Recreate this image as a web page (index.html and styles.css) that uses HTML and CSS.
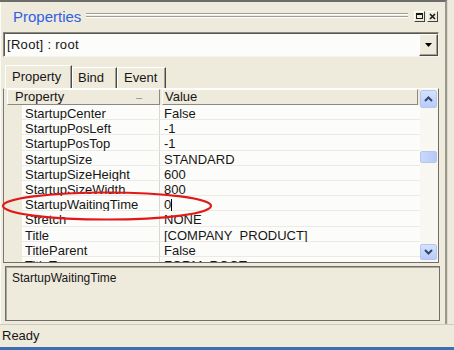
FILE: index.html
```html
<!DOCTYPE html>
<html>
<head>
<meta charset="utf-8">
<title>Properties</title>
<link rel="stylesheet" href="styles.css">
</head>
<body>
<div class="app">
  <div class="main">
    <div class="panel">
      <div class="titlebar">
        <span class="title">Properties</span>
        <span class="grip"></span>
        <span class="tbtn first"><svg width="9" height="9" viewBox="0 0 9 9"><rect x="1.5" y="1.5" width="6" height="5" fill="none" stroke="#1a1a1a"/><rect x="1" y="1" width="7" height="2" fill="#1a1a1a"/></svg></span>
        <span class="tbtn"><svg width="9" height="9" viewBox="0 0 9 9"><path d="M2 2 L7 7 M7 2 L2 7" stroke="#1a1a1a" stroke-width="1.6"/></svg></span>
      </div>
      <div class="combo">
        <span class="combo-text">[Root] : root</span>
        <span class="combo-btn"><svg width="7" height="4" viewBox="0 0 7 4"><path d="M0 0h7L3.5 4z" fill="#000"/></svg></span>
      </div>
      <div class="tabs">
        <span class="tab active t1">Property</span>
        <span class="tab t2">Bind</span>
        <span class="tab t3">Event</span>
      </div>
      <div class="grid">
        <div class="table">
          <div class="head">
            <div class="hcell hname">Property<span class="sort">–</span></div>
            <div class="hcell hval">Value</div>
          </div>
          <div class="rows">
            <div class="row"><span class="gut"></span><span class="name">StartupCenter</span><span class="val">False</span></div>
            <div class="row"><span class="gut"></span><span class="name">StartupPosLeft</span><span class="val">-1</span></div>
            <div class="row"><span class="gut"></span><span class="name">StartupPosTop</span><span class="val">-1</span></div>
            <div class="row"><span class="gut"></span><span class="name">StartupSize</span><span class="val">STANDARD</span></div>
            <div class="row"><span class="gut"></span><span class="name">StartupSizeHeight</span><span class="val">600</span></div>
            <div class="row"><span class="gut"></span><span class="name">StartupSizeWidth</span><span class="val">800</span></div>
            <div class="row"><span class="gut"></span><span class="name">StartupWaitingTime</span><span class="val">0<span class="caret"></span></span></div>
            <div class="row"><span class="gut"></span><span class="name">Stretch</span><span class="val">NONE</span></div>
            <div class="row"><span class="gut"></span><span class="name">Title</span><span class="val">[COMPANY_PRODUCT]</span></div>
            <div class="row"><span class="gut"></span><span class="name">TitleParent</span><span class="val">False</span></div>
            <div class="row"><span class="gut"></span><span class="name">TitleType</span><span class="val">FORM_ROOT</span></div>
          </div>
        </div>
        <div class="vscroll">
          <div class="sbtn up"><svg width="13" height="8" viewBox="0 0 13 8"><path d="M3 6 L6.5 2.5 L10 6" fill="none" stroke="#33466e" stroke-width="2"/></svg></div>
          <div class="track"><div class="thumb"></div></div>
          <div class="sbtn down"><svg width="13" height="8" viewBox="0 0 13 8"><path d="M3 2 L6.5 5.5 L10 2" fill="none" stroke="#33466e" stroke-width="2"/></svg></div>
        </div>
      </div>
      <div class="desc">StartupWaitingTime</div>
    </div>
    <div class="side"></div>
  </div>
  <div class="status">Ready</div>
  <div class="taskbar"></div>
  <svg class="mark" width="214" height="32" viewBox="0 0 214 32"><ellipse cx="107" cy="16" rx="104" ry="13.5" fill="none" stroke="#e01818" stroke-width="2.2"/></svg>
</div>
</body>
</html>
```

FILE: styles.css
```css
* { box-sizing: border-box; }
html, body { margin: 0; padding: 0; }
body {
  width: 454px;
  height: 350px;
  overflow: hidden;
  background: #eeeadc;
  font-family: "Liberation Sans", Arial, sans-serif;
  font-size: 13px;
  color: #161616;
}
.app { position: relative; height: 350px; display: flex; flex-direction: column; }
.main { display: flex; height: 324px; }
.panel {
  width: 447px;
  border-top: 2px solid #6c6c6a;
  border-right: 2px solid #9a978c;
  box-shadow: inset 1px 0 0 #fbfbf8;
  display: flex;
  flex-direction: column;
}
.side { flex: 1; border-left: 1px solid #dcd8ca; }

/* title bar */
.titlebar {
  height: 28px;
  display: flex;
  align-items: center;
  padding: 0 7px 0 13px;
}
.title { color: #2f60e4; font-size: 15px; margin-right: 5px; }
.grip {
  flex: 1;
  height: 6px;
  background: linear-gradient(to bottom, #a19e94 0 1px, #ffffff 1px 2px, transparent 2px 3px, #a19e94 3px 4px, #ffffff 4px 5px, transparent 5px);
}
.tbtn {
  width: 11px;
  height: 11px;
  margin-left: 2px;
  border-left: 1px solid #ffffff;
  border-top: 1px solid #ffffff;
  border-right: 1px solid #404040;
  border-bottom: 1px solid #404040;
  display: flex;
  align-items: center;
  justify-content: center;
}
.tbtn.first { margin-left: 6px; }

/* combo */
.combo {
  margin: 2px 6px 0 3px;
  height: 25px;
  display: flex;
  align-items: center;
  background: #fcfcfa;
  border: 1px solid;
  border-color: #8a877d #f4f3ee #f4f3ee #8a877d;
  box-shadow: inset 1px 1px 0 #5a5852;
}
.combo-text { padding-left: 3px; letter-spacing: 0.3px; }
.combo-btn {
  margin-left: auto;
  width: 19px;
  height: 22px;
  background: #eeeadc;
  border: 1px solid;
  border-color: #ffffff #4a4a46 #4a4a46 #ffffff;
  box-shadow: inset -1px -1px 0 #a3a096;
  display: flex;
  align-items: center;
  justify-content: center;
}

/* tabs */
.tabs {
  margin-top: 7px;
  height: 24px;
  padding-left: 5px;
  display: flex;
  align-items: flex-end;
}
.tab {
  height: 21px;
  line-height: 20px;
  padding-left: 6px;
  border-top: 1px solid #ffffff;
  border-left: 1px solid #ffffff;
  border-right: 1px solid #4a4a46;
  box-shadow: inset -1px 0 0 #a3a096;
}
.tab.active { height: 23px; line-height: 21px; }
.t1 { width: 67px; }
.t2 { width: 45px; padding-left: 5px; }
.t3 { width: 49px; }

/* grid */
.grid {
  margin: 0 6px 0 3px;
  height: 175px;
  display: flex;
  border: 1px solid;
  border-color: #fdfdfb #6f6d66 #6f6d66 #7a786f;
}
.table { flex: 1; overflow: hidden; display: flex; flex-direction: column; }
.head {
  height: 16px;
  display: flex;
  padding: 0 2px 0 3px;
  background: #eeeadc;
}
.hcell {
  height: 16px;
  line-height: 14px;
  padding-left: 7px;
  border: 1px solid;
  border-color: #ffffff #8c8a80 #8c8a80 #ffffff;
  position: relative;
}
.hname { width: 153px; }
.hval { flex: 1; margin-left: 2px; padding-left: 2px; }
.sort { position: absolute; left: 128px; top: 0; color: #8a8a8a; font-size: 11px; }
.rows { flex: 1; overflow: hidden; }
.row {
  height: 15.2px;
  display: flex;
  line-height: 14px;
}
.gut { width: 18px; background: #eeeadc; }
.name {
  width: 138px;
  padding: 2px 0 0 3px;
  background: #fcfcfa;
  border-right: 1px solid #dad8cf;
  border-bottom: 1px solid #ecebe3;
  white-space: nowrap;
}
.val {
  flex: 1;
  padding: 2px 0 0 4px;
  background: #fcfcfa;
  border-bottom: 1px solid #ecebe3;
  white-space: nowrap;
}
.caret {
  display: inline-block;
  width: 1px;
  height: 12px;
  background: #000;
  vertical-align: -2px;
}

/* scrollbar */
.vscroll {
  width: 18px;
  display: flex;
  flex-direction: column;
  padding: 1px 1px 2px 0;
  background: #f8f7f2;
}
.sbtn {
  border: 1px solid #b5c7f1;
  border-radius: 2px;
  background: linear-gradient(to bottom, #d5e1fd, #b9cbf8);
  display: flex;
  align-items: center;
  justify-content: center;
}
.sbtn.up { height: 18px; }
.sbtn.down { height: 16px; }
.track { flex: 1; }
.thumb {
  margin-top: 43px;
  height: 12px;
  border: 1px solid #b5c7f1;
  border-radius: 2px;
  background: linear-gradient(to right, #c9d8fc, #b6c9f7);
}

/* description */
.desc {
  margin: 3px 5px 0 5px;
  height: 55px;
  padding: 4px 6px;
  font-size: 12px;
  line-height: 14px;
  border: 1px solid #6f6d66;
  box-shadow: inset 1px 1px 0 #aaa89e;
}

/* status */
.status {
  height: 23px;
  line-height: 21px;
  padding-left: 2px;
  border-top: 1px solid #cfcbbd;
}
.taskbar { height: 3px; background: #3e6fb3; }

.mark { position: absolute; left: 0; top: 190px; }
```
